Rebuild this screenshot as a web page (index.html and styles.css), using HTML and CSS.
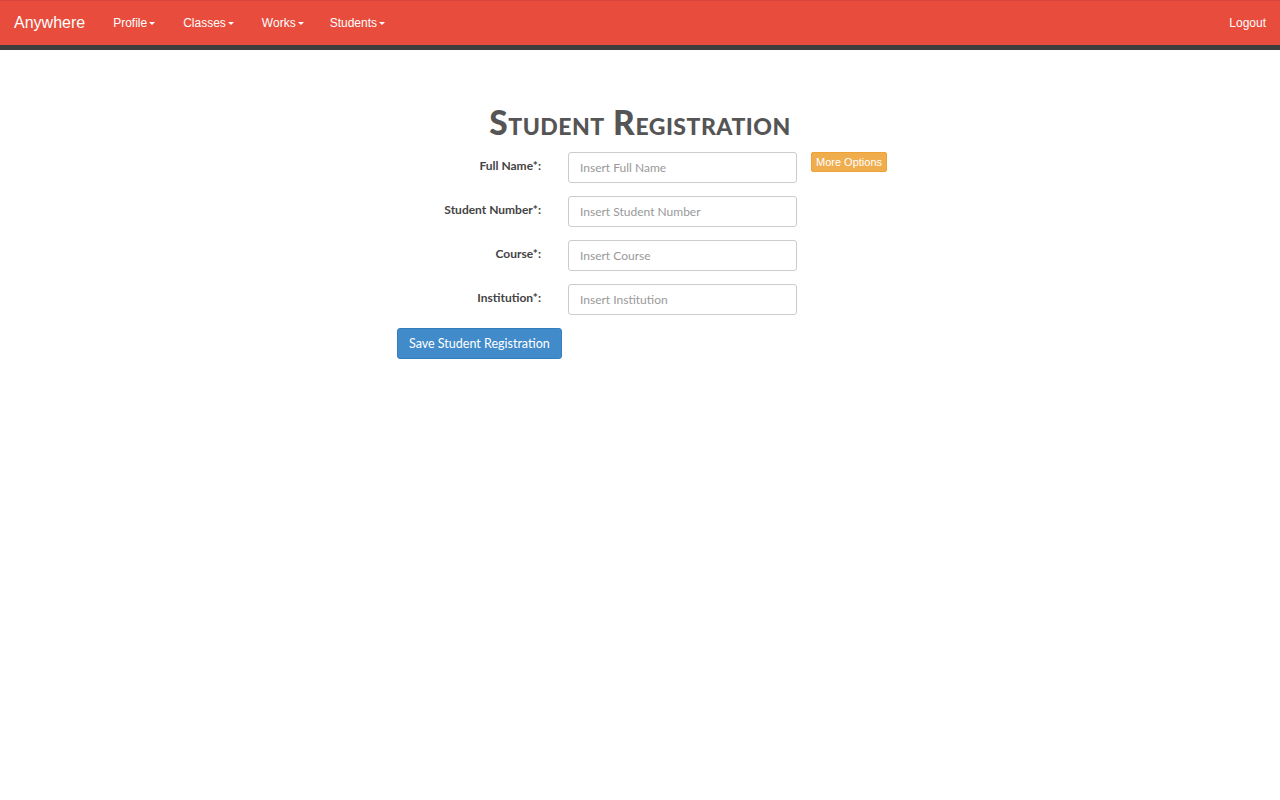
FILE: index.html
```html
<!DOCTYPE html>
<html lang="en">
<head>
<meta charset="utf-8">
<title>Student Registration</title>
<link rel="stylesheet" href="styles.css">
</head>
<body>
<nav class="navbar">
  <div class="nav-left">
    <a class="brand" href="#">Anywhere</a>
    <a class="nav-link" href="#">Profile<span class="caret"></span></a>
    <a class="nav-link" href="#">Classes<span class="caret"></span></a>
    <a class="nav-link" href="#">Works<span class="caret"></span></a>
    <a class="nav-link" href="#">Students<span class="caret"></span></a>
  </div>
  <a class="nav-link logout" href="#">Logout</a>
</nav>
<main class="page">
  <h1 class="title">Student Registration</h1>
  <form class="form">
    <div class="row">
      <label class="label">Full Name*:</label>
      <input class="input" type="text" placeholder="Insert Full Name">
      <button type="button" class="btn-more">More Options</button>
    </div>
    <div class="row">
      <label class="label">Student Number*:</label>
      <input class="input" type="text" placeholder="Insert Student Number">
    </div>
    <div class="row">
      <label class="label">Course*:</label>
      <input class="input" type="text" placeholder="Insert Course">
    </div>
    <div class="row">
      <label class="label">Institution*:</label>
      <input class="input" type="text" placeholder="Insert Institution">
    </div>
    <button type="button" class="btn-save">Save Student Registration</button>
  </form>
</main>
</body>
</html>
```
FILE: styles.css
```css
* { box-sizing: border-box; }
html, body { margin: 0; padding: 0; background: #fff; }
body { font-family: "Lato", "Liberation Sans", sans-serif; color: #555; }

.navbar {
  display: flex;
  justify-content: space-between;
  align-items: center;
  height: 50px;
  background: #e74c3c;
  border-top: 1px solid #d9453a;
  border-bottom: 5px solid #3d3d3d;
  font-family: "Liberation Sans", Arial, sans-serif;
}
.nav-left { display: flex; align-items: center; height: 100%; }
.brand {
  color: #fff;
  text-decoration: none;
  font-size: 16px;
  padding: 0 14px 0 14px;
  line-height: 44px;
}
.nav-link {
  color: #fff;
  text-decoration: none;
  font-size: 12px;
  line-height: 44px;
  padding: 0 14px;
  display: flex;
  align-items: center;
}
.nav-left .nav-link:last-child { margin-left: -2px; }
.caret {
  display: inline-block;
  width: 0; height: 0;
  margin-left: 2px;
  margin-top: 1px;
  border-top: 3px solid #fff;
  border-left: 3px solid transparent;
  border-right: 3px solid transparent;
}
.logout { padding-right: 14px; }

.page { width: 486px; margin: 0 0 0 397px; padding-top: 55px; }
.title {
  margin: 0 0 13px 0;
  text-align: center;
  width: 486px;
  font-size: 33.5px;
  line-height: 34px;
  font-weight: 900;
  font-variant: small-caps;
  letter-spacing: 0.5px;
  color: #555;
}
.form { display: flex; flex-direction: column; align-items: flex-start; }
.row {
  display: flex;
  align-items: flex-start;
  height: 44px;
  flex-shrink: 0;
}
.label {
  flex-shrink: 0;
  width: 144px;
  text-align: right;
  font-size: 12px;
  font-weight: 700;
  color: #444;
  padding-top: 6px;
  margin-right: 27px;
}
.input {
  flex-shrink: 0;
  width: 229px;
  height: 31px;
  border: 1px solid #ccc;
  border-radius: 3px;
  padding: 0 11px;
  font-family: inherit;
  font-size: 12px;
  color: #555;
}
.input::placeholder { color: #999; }
.btn-more {
  flex-shrink: 0;
  white-space: nowrap;
  margin-left: 14px;
  height: 20px;
  padding: 0 4px;
  background: #f0ad4e;
  border: 1px solid #eea236;
  border-radius: 2px;
  color: #fff;
  font-family: "Liberation Sans", Arial, sans-serif;
  font-size: 11px;
}
.btn-save {
  height: 31px;
  padding: 0 11px;
  background: #428bca;
  border: 1px solid #357ebd;
  border-radius: 3px;
  color: #fff;
  font-family: inherit;
  font-size: 12.5px;
}
```
